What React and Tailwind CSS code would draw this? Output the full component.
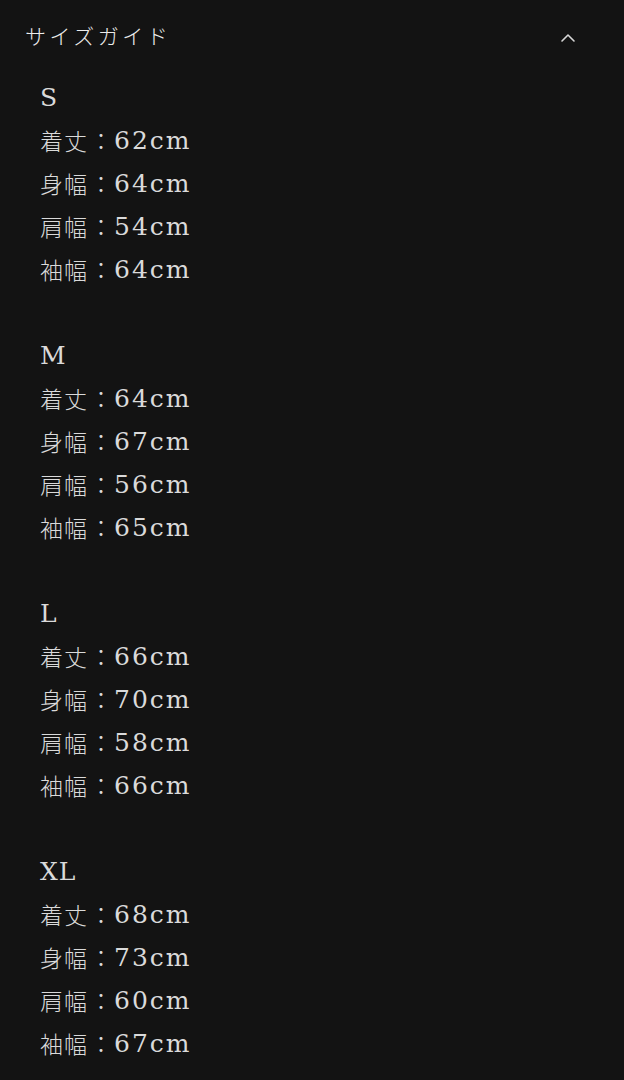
import React from "react";

const sizes = [
  { name: "S", rows: [["着丈", "62cm"], ["身幅", "64cm"], ["肩幅", "54cm"], ["袖幅", "64cm"]] },
  { name: "M", rows: [["着丈", "64cm"], ["身幅", "67cm"], ["肩幅", "56cm"], ["袖幅", "65cm"]] },
  { name: "L", rows: [["着丈", "66cm"], ["身幅", "70cm"], ["肩幅", "58cm"], ["袖幅", "66cm"]] },
  { name: "XL", rows: [["着丈", "68cm"], ["身幅", "73cm"], ["肩幅", "60cm"], ["袖幅", "67cm"]] },
];

const serif = "font-['DejaVu_Serif',serif]";
const jp = "font-['Noto_Sans_CJK_JP',sans-serif]";

export default function App() {
  return (
    <div className="min-h-screen w-full bg-[#131313] text-[#dadada]">
      {/* header */}
      <div className="flex h-[72px] items-center justify-between pl-[25px] pr-[48px]">
        <span className={`${jp} text-[21px] font-light tracking-[3.5px] text-[#ececec]`}>サイズガイド</span>
        <svg width="16" height="10" viewBox="0 0 16 10" fill="none" className="mt-[4px]">
          <path d="M2 8 L8 2 L14 8" stroke="#d8d8d8" strokeWidth="1.6" strokeLinecap="round" strokeLinejoin="round" />
        </svg>
      </div>

      <div className="mt-[4px] pl-[40px]">
        {sizes.map((s, i) => (
          <div key={s.name} className={i > 0 ? "mt-[43px]" : ""}>
            <div className={`${serif} flex h-[43px] items-center text-[25px] leading-none tracking-[1px]`}>{s.name}</div>
            {s.rows.map(([label, value]) => (
              <div key={label} className="flex h-[43px] items-center">
                <span className={`${jp} text-[23px] font-light leading-none tracking-[1px]`}>{label}</span>
                <span className={`${jp} inline-block w-[26px] text-center text-[23px] font-light leading-none`}>：</span>
                <span className={`${serif} text-[25px] leading-none tracking-[2px]`}>{value}</span>
              </div>
            ))}
          </div>
        ))}
      </div>
    </div>
  );
}
